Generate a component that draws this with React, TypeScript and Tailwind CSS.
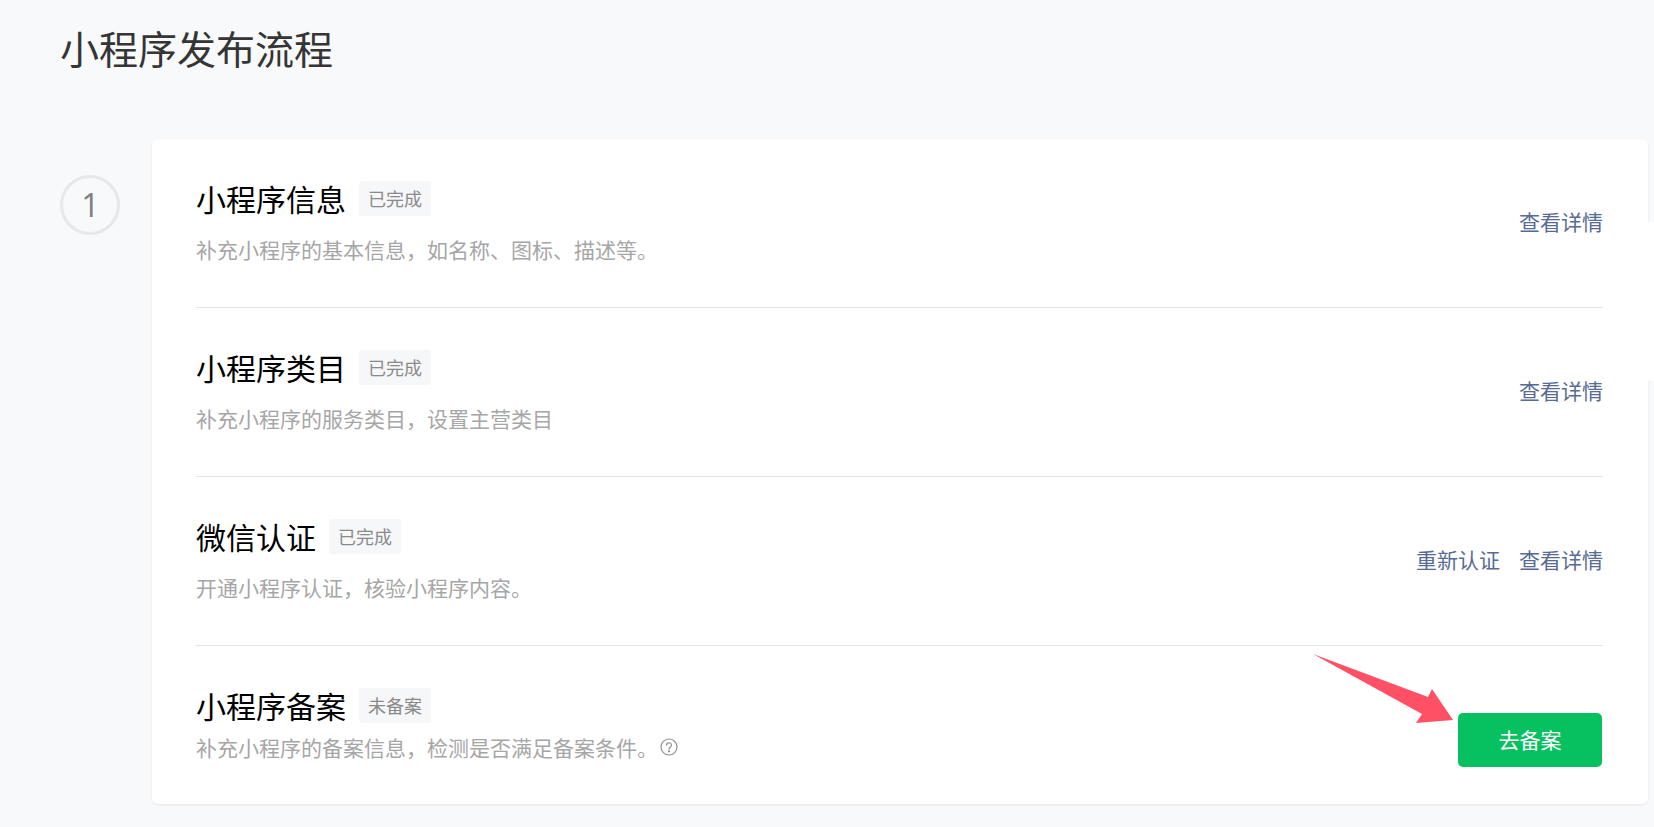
const font = { fontFamily: '"Noto Sans CJK SC", sans-serif' };

function Row({ title, tag, desc, help, last, children }: { title: string; tag: string; desc: string; help?: boolean; last?: boolean; children: React.ReactNode }) {
  return (
    <div className={last ? "flex h-[158px] items-start justify-between" : "flex h-[169px] items-center justify-between border-b border-[#e5e5e5]"}>
      <div className={last ? "pt-[38px]" : "pb-[5px]"}>
        <div className="flex items-center">
          <span className="text-[30px] leading-[42px] text-black">{title}</span>
          <span className="ml-[13px] flex h-[35px] items-center rounded-[3px] bg-[#f6f7f9] px-[9px] text-[18px] text-[#8a8a8a]">{tag}</span>
        </div>
        <div className={last ? "mt-[6px] flex items-center text-[21px] leading-[30px] text-[#a6a6a6]" : "mt-[15px] flex items-center text-[21px] leading-[30px] text-[#a6a6a6]"}>
          <span>{desc}</span>
          {help && (
            <svg className="ml-[2px]" width="18" height="18" viewBox="0 0 18 18" fill="none" stroke="#8f8f8f" strokeWidth="1.2">
              <circle cx="9" cy="9" r="8" />
              <path d="M6.6 7.2a2.4 2.4 0 1 1 3.7 2c-.8.5-1.3.9-1.3 1.9" strokeLinecap="round" />
              <circle cx="9" cy="13.3" r=".5" fill="#8f8f8f" />
            </svg>
          )}
        </div>
      </div>
      {children}
    </div>
  );
}

function Links({ labels }: { labels: string[] }) {
  return (
    <div className="mb-[2px] flex gap-[19px] text-[21px] text-[#576b95]">
      {labels.map((l) => (
        <span key={l}>{l}</span>
      ))}
    </div>
  );
}

export default function App() {
  return (
    <div className="relative h-[827px] w-[1654px] overflow-hidden bg-[#f8f9fb] pl-[60px]" style={font}>
      <h1 className="flex h-[139px] items-start pt-[20px] text-[39px] font-normal leading-[54px] text-[#353535]">小程序发布流程</h1>
      <div className="flex">
        <div className="mt-[36px] flex h-[60px] w-[60px] shrink-0 items-center justify-center rounded-full border-[3px] border-[#e7e8ea] pl-[1px] text-[32px] text-[#7f7f7f]" style={{ fontFamily: '"Open Sans", sans-serif' }}>1</div>
        <div className="ml-[32px] h-[665px] w-[1496px] shrink-0 rounded-[6px] bg-white pl-[44px] shadow-[0_1px_3px_rgba(0,0,0,0.08)]">
          <div className="w-[1407px]">
            <Row title="小程序信息" tag="已完成" desc={"补充小程序的基本信息\uFF0C如名称、图标、描述等。"}><Links labels={["查看详情"]} /></Row>
            <Row title="小程序类目" tag="已完成" desc={"补充小程序的服务类目\uFF0C设置主营类目"}><Links labels={["查看详情"]} /></Row>
            <Row title="微信认证" tag="已完成" desc={"开通小程序认证\uFF0C核验小程序内容。"}><Links labels={["重新认证", "查看详情"]} /></Row>
            <Row last help title="小程序备案" tag="未备案" desc={"补充小程序的备案信息\uFF0C检测是否满足备案条件。"}>
              <button className="mr-[1px] mt-[67px] flex h-[54px] w-[144px] items-center justify-center rounded-[5px] bg-[#07c160] text-[21px] text-white">去备案</button>
            </Row>
          </div>
        </div>
      </div>
      <div className="absolute left-[1648px] top-[222px] h-[159px] w-[6px] bg-white" />
      <svg className="absolute left-[1311px] top-[652px]" width="150" height="74" viewBox="0 0 150 74">
        <polygon points="2,2 117,45 121,37 142,68 105,71 111,62" fill="#ff5065" />
      </svg>
    </div>
  );
}
